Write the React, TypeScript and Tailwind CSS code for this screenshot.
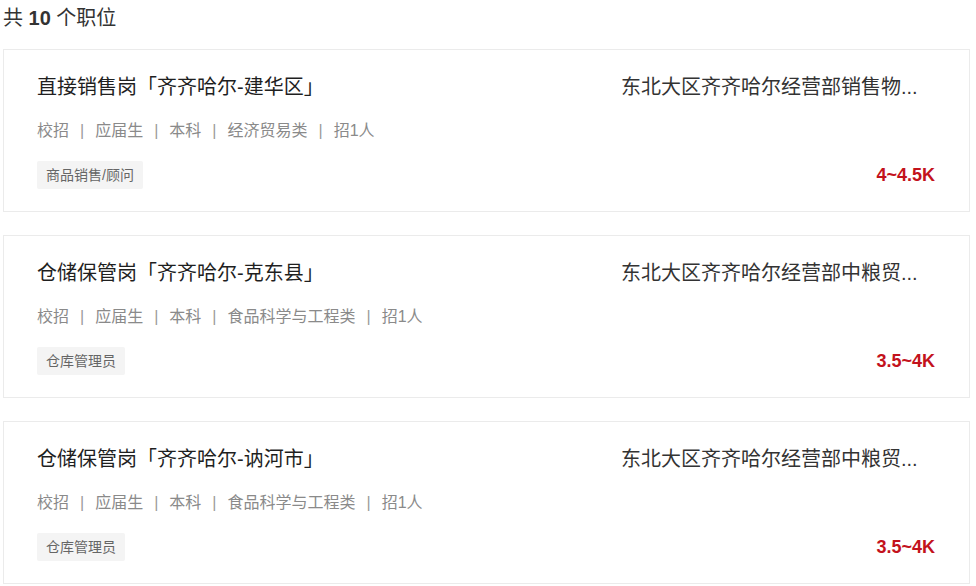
import React from 'react';

type Job = {
  title: string;
  meta: string[];
  tag: string;
  company: string;
  salary: string;
};

const JOBS: Job[] = [
  {
    title: '直接销售岗「齐齐哈尔-建华区」',
    meta: ['校招', '应届生', '本科', '经济贸易类', '招1人'],
    tag: '商品销售/顾问',
    company: '东北大区齐齐哈尔经营部销售物...',
    salary: '4~4.5K',
  },
  {
    title: '仓储保管岗「齐齐哈尔-克东县」',
    meta: ['校招', '应届生', '本科', '食品科学与工程类', '招1人'],
    tag: '仓库管理员',
    company: '东北大区齐齐哈尔经营部中粮贸...',
    salary: '3.5~4K',
  },
  {
    title: '仓储保管岗「齐齐哈尔-讷河市」',
    meta: ['校招', '应届生', '本科', '食品科学与工程类', '招1人'],
    tag: '仓库管理员',
    company: '东北大区齐齐哈尔经营部中粮贸...',
    salary: '3.5~4K',
  },
];

function JobCard({ job }: { job: Job }) {
  return (
    <div className="flex h-[163px] justify-between border border-[#ebebeb] bg-white pl-[33px] pr-[33px] pt-[23px]">
      <div className="flex flex-col">
        <h3 className="text-[20px] leading-[28px] font-normal text-[#1f1f1f]">
          {job.title}
        </h3>

        <div className="mt-[18px] flex items-center text-[16px] leading-[24px] text-[#8a8a8a]">
          {job.meta.map((item, i) => (
            <React.Fragment key={item + i}>
              {i > 0 && <span className="mx-[11px] text-[#9a9a9a]">|</span>}
              <span>{item}</span>
            </React.Fragment>
          ))}
        </div>

        <div className="mt-[18px] flex">
          <span className="flex h-[28px] items-center rounded-[2px] bg-[#f4f4f4] px-[9px] text-[14px] text-[#666]">
            {job.tag}
          </span>
        </div>
      </div>

      <div className="flex w-[315px] flex-col justify-between pb-[22px]">
        <p className="truncate text-[20px] leading-[28px] text-[#333]">
          {job.company}
        </p>
        <p className="flex h-[28px] items-center justify-end pr-[1px] text-[18px] font-bold text-[#c3121c]">
          {job.salary}
        </p>
      </div>
    </div>
  );
}

export default function App() {
  return (
    <div
      className="min-h-screen bg-white pl-[3px] pr-[6px]"
      style={{
        fontFamily:
          '"Liberation Sans", "Noto Sans CJK SC", "Microsoft YaHei", sans-serif',
      }}
    >
      <div className="pt-[4px] text-[20px] leading-[28px] text-[#333]">
        共 <span className="font-bold">10</span> 个职位
      </div>

      <div className="mt-[17px] flex flex-col gap-[23px]">
        {JOBS.map((job) => (
          <JobCard key={job.title} job={job} />
        ))}
      </div>
    </div>
  );
}
